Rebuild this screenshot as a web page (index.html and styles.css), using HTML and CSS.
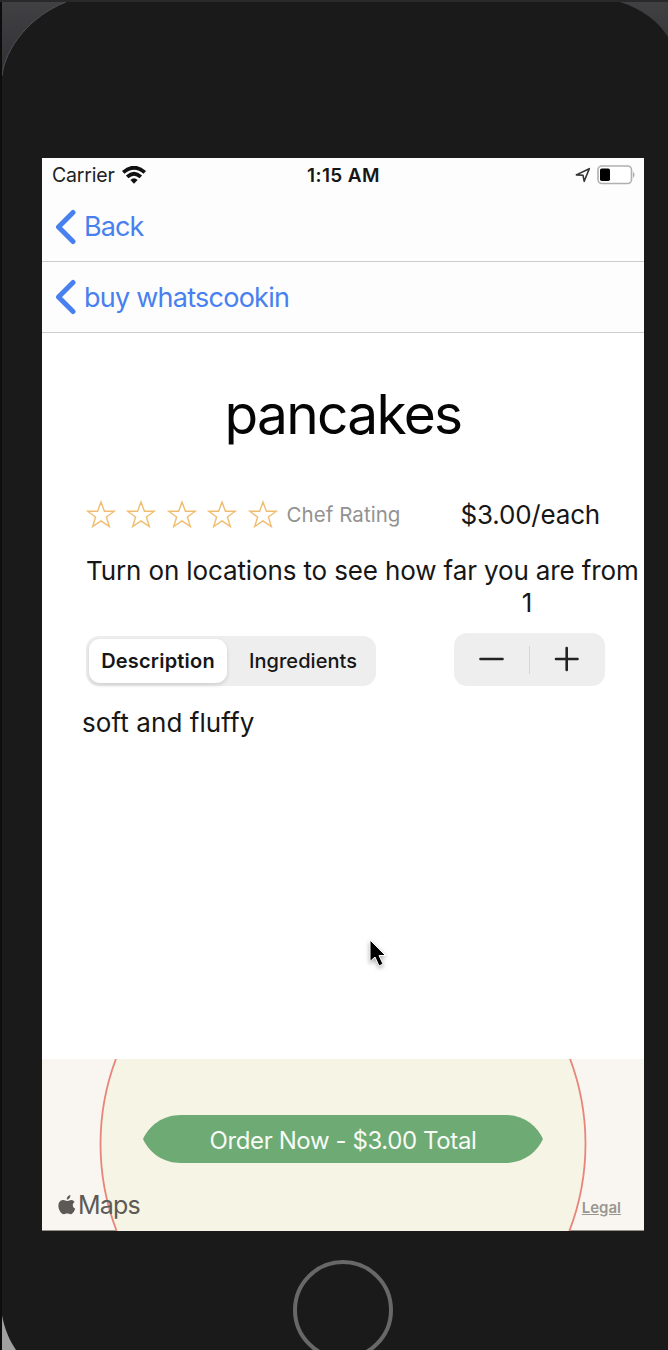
FILE: index.html
```html
<!DOCTYPE html>
<html lang="en">
<head>
<meta charset="utf-8">
<title>pancakes</title>
<link rel="stylesheet" href="styles.css">
</head>
<body>
<main class="device">
  <svg class="shell" viewBox="0 0 668 1350" aria-hidden="true">
    <defs>
      <linearGradient id="corner" x1="0" y1="0" x2="0" y2="1"><stop offset="0" stop-color="#414144"/><stop offset="1" stop-color="#303034"/></linearGradient>
    </defs>
    <path d="M0 0H668V80H0Z" fill="url(#corner)"/>
    <path d="M0 1300H40V1350H0Z" fill="#a0a0a0"/>
    <path d="M2 76C5 48 30 16 66 2H620C642 9 658 21 668 37V1350H16C9 1340 4 1327 2 1315Z" fill="#1a1a1a"/>
    <path d="M2 76C5 48 30 16 66 2" fill="none" stroke="#505053"/>
    <path d="M0 0H668V2H0Z" fill="#29292a"/>
    <path d="M0 2H2V1350H0Z" fill="#0d0d0d"/>
  </svg>
  <section class="screen">
    <header class="status">
      <div class="carrier"><span>Carrier</span>
        <svg width="24" height="18" viewBox="0 0 24 18"><g fill="none" stroke="#111" stroke-width="3.8"><path d="M1.2 6.4Q12-3 22.8 6.4"/><path d="M5.2 10.8Q12 4.6 18.8 10.8"/></g><path d="M8.4 14Q12 10.6 15.6 14L12 17.8Z" fill="#111"/></svg>
      </div>
      <div class="clock">1:15 AM</div>
      <div class="power">
        <svg width="16" height="16" viewBox="0 0 16 16"><path d="M1.3 7.9L14.3 1.7L9.2 14.3L8 8.2Z" fill="none" stroke="#333" stroke-width="1.6" stroke-linejoin="round"/></svg>
        <svg width="38" height="20" viewBox="0 0 38 20"><rect x="1" y="1" width="33.5" height="17.5" rx="4" fill="#fff" stroke="#b0b0b0" stroke-width="1.6"/><rect x="3" y="3.5" width="10" height="12.5" rx="1.8"/><path d="M36 6.5Q39 9.8 36 13Z" fill="#aaa"/></svg>
      </div>
    </header>
    <nav class="nav nav-outer"><svg class="chevron" width="22" height="36" viewBox="0 0 22 36"><path d="M18 3.5L3.5 18L18 32.5"/></svg><a class="back">Back</a></nav>
    <nav class="nav nav-inner"><svg class="chevron" width="22" height="36" viewBox="0 0 22 36"><path d="M18 3.5L3.5 18L18 32.5"/></svg><a>buy whatscookin</a></nav>
    <div class="detail">
      <h1 class="title">pancakes</h1>
      <div class="facts">
        <div class="stars">
          <svg class="star" viewBox="0 0 30 29"><path d="M15 2L18.4 11.2H28.3L20.4 17L23.3 26.5L15 20.8L6.7 26.5L9.6 17L1.7 11.2H11.6Z"/></svg>
          <svg class="star" viewBox="0 0 30 29"><path d="M15 2L18.4 11.2H28.3L20.4 17L23.3 26.5L15 20.8L6.7 26.5L9.6 17L1.7 11.2H11.6Z"/></svg>
          <svg class="star" viewBox="0 0 30 29"><path d="M15 2L18.4 11.2H28.3L20.4 17L23.3 26.5L15 20.8L6.7 26.5L9.6 17L1.7 11.2H11.6Z"/></svg>
          <svg class="star" viewBox="0 0 30 29"><path d="M15 2L18.4 11.2H28.3L20.4 17L23.3 26.5L15 20.8L6.7 26.5L9.6 17L1.7 11.2H11.6Z"/></svg>
          <svg class="star" viewBox="0 0 30 29"><path d="M15 2L18.4 11.2H28.3L20.4 17L23.3 26.5L15 20.8L6.7 26.5L9.6 17L1.7 11.2H11.6Z"/></svg>
        </div>
        <span class="rating">Chef Rating</span>
        <span class="price">$3.00/each</span>
      </div>
      <p class="location">Turn on locations to see how far you are from</p>
      <div class="options">
        <div class="segments"><span class="segment active">Description</span><span class="segment other">Ingredients</span></div>
        <div class="quantity">
          <div class="count">1</div>
          <div class="stepper">
            <svg width="75" height="50" viewBox="0 0 75 50"><path d="M26.5 24H48.5"/></svg>
            <i class="divider"></i>
            <svg width="74" height="50" viewBox="0 0 74 50"><path d="M26 24H47.5M36.7 13V35"/></svg>
          </div>
        </div>
      </div>
      <p class="description">soft and fluffy</p>
    </div>
    <footer class="map">
      <svg class="radius" viewBox="0 0 602 172"><circle cx="301" cy="85" r="242.5" fill="#f6f4e4" stroke="#e8857a" stroke-width="1.8"/></svg>
      <svg class="order-shape" width="400" height="48" viewBox="0 0 400 48"><path d="M0 24C6 11 19 0 38 0H362C381 0 394 11 400 24C394 37 381 48 362 48H38C19 48 6 37 0 24Z" fill="#6eaa74"/></svg>
      <button class="order">Order Now - $3.00 Total</button>
      <div class="credits">
        <span class="brand"><svg width="18" height="20" viewBox="0 0 18 20"><path d="M12.4 0C12.6 2.4 10.8 4.6 8.7 4.5C8.5 2.3 10.3.3 12.4 0ZM16.6 7.1C14 8.6 14.2 12.4 17.2 13.7C16.3 16.5 14.4 19.3 12.5 19.3C11.2 19.3 10.7 18.6 9.2 18.6C7.7 18.6 7.2 19.3 6 19.3C3 19.3.4 14.6.4 10.8C.4 7.1 2.7 5 5.1 5C6.8 5 7.9 6 9.2 6C10.3 6 11.6 4.9 13.4 4.9C14.7 4.9 15.8 5.7 16.6 7.1Z" fill="#5b5a57"/></svg><span>Maps</span></span>
        <a class="legal">Legal</a>
      </div>
    </footer>
  </section>
  <div class="home"></div>
  <svg class="cursor" width="22" height="32" viewBox="0 0 22 32"><path d="M3 3V24.5L8 20L12 29L16 27L12 18.5H18.5Z" fill="#000" stroke="#fff" stroke-width="1"/></svg>
</main>
</body>
</html>
```
FILE: styles.css
```css
* { box-sizing: border-box; }
body { margin: 0; background: #1a1a1a; font-family: Inter, "Liberation Sans", sans-serif; color: #161616; }
.device { position: relative; width: 668px; height: 1350px; padding: 158px 24px 0 42px; overflow: hidden; }
.shell { position: absolute; left: 0; top: 0; width: 668px; height: 1350px; }
.screen { position: relative; width: 602px; height: 1073px; background: #fff; display: flex; flex-direction: column; overflow: hidden; white-space: nowrap; }

.status { display: grid; grid-template-columns: 1fr auto 1fr; align-items: center; height: 34px; padding: 0 9px 0 10px; background: #fdfdfd; }
.carrier { display: flex; align-items: center; gap: 7px; font-size: 19.5px; letter-spacing: -0.2px; color: #222; }
.clock { font-size: 19px; font-weight: 600; letter-spacing: 0.4px; }
.power { display: flex; align-items: center; justify-content: flex-end; gap: 6px; }

.nav { display: flex; align-items: center; gap: 7px; padding-left: 13px; background: #fdfdfd; border-bottom: 1.5px solid #ccc; color: #4880ef; font-size: 27px; letter-spacing: -0.75px; }
.nav-outer { height: 70px; }
.nav-inner { height: 71px; }
.back { letter-spacing: -0.9px; }
.chevron path { fill: none; stroke: #4880ef; stroke-width: 5; stroke-linecap: round; stroke-linejoin: round; }

.detail { height: 726px; }
.title { margin: 0; padding-top: 44px; height: 152px; text-align: center; font-size: 55px; font-weight: 400; letter-spacing: -1.7px; line-height: 74px; color: #050505; }
.facts { display: flex; align-items: center; height: 58px; padding-left: 44px; }
.stars { display: flex; gap: 10.4px; }
.star { width: 30px; height: 29px; }
.star path { fill: none; stroke: #efbd70; stroke-width: 1.4; }
.rating { margin-left: 9px; width: 174px; font-size: 20.5px; letter-spacing: 0.05px; color: #929292; }
.price { font-size: 26px; letter-spacing: -0.2px; }
.location { margin: 0; padding-left: 44px; height: 46px; line-height: 56px; font-size: 26px; letter-spacing: -0.13px; }
.options { display: flex; justify-content: space-between; align-items: flex-end; height: 97px; padding: 0 39px 0 44px; }
.segments { display: flex; width: 290px; height: 50px; padding: 3px; border-radius: 13px; background: #eeeeef; font-size: 20px; font-weight: 500; }
.segment { flex: 1; display: flex; align-items: center; justify-content: center; border-radius: 11px; }
.active { flex: 0 0 138px; background: #fff; font-weight: 600; letter-spacing: 0.2px; box-shadow: 0 2px 4px #0002; }
.other { padding-left: 6px; letter-spacing: 0.05px; }
.quantity { width: 151px; }
.count { height: 47px; line-height: 33px; text-align: center; font-size: 26px; padding-right: 5px; }
.stepper { display: flex; align-items: center; height: 53px; border-radius: 13px; background: #eeeeef; }
.stepper path { stroke: #222; stroke-width: 2.6; stroke-linecap: round; }
.divider { width: 1px; height: 28px; background: #d5d5d5; }
.description { margin: 0; padding: 12px 0 0 40px; line-height: 50px; font-size: 26px; letter-spacing: 0.08px; }

.map { position: relative; display: flex; flex-direction: column; justify-content: space-between; align-items: center; height: 172px; padding-top: 56px; background: #f9f6f2; border-bottom: 1px solid #918f86; }
.radius { position: absolute; left: 0; top: 0; width: 602px; height: 172px; }
.order-shape { position: absolute; left: 101px; top: 56px; }
.order { position: relative; width: 400px; height: 48px; padding: 2px 0 0; border: 0; background: none; color: #f7fbf5; font: 24px Inter, "Liberation Sans", sans-serif; letter-spacing: -0.4px; }
.credits { position: relative; display: flex; justify-content: space-between; align-items: flex-end; width: 100%; height: 40px; padding: 0 23px 10px 16px; }
.brand { display: flex; align-items: center; gap: 2px; font-size: 25px; letter-spacing: -0.8px; line-height: 30px; color: #5b5a57; }
.legal { font-size: 15px; font-weight: 600; color: #999791; text-decoration: underline; line-height: 24px; }
.home { position: absolute; left: 293px; top: 1260px; width: 100px; height: 100px; border: 4px solid #686868; border-radius: 50%; }
.cursor { position: absolute; left: 367px; top: 937px; filter: drop-shadow(0 2px 2px #0005); }
```
